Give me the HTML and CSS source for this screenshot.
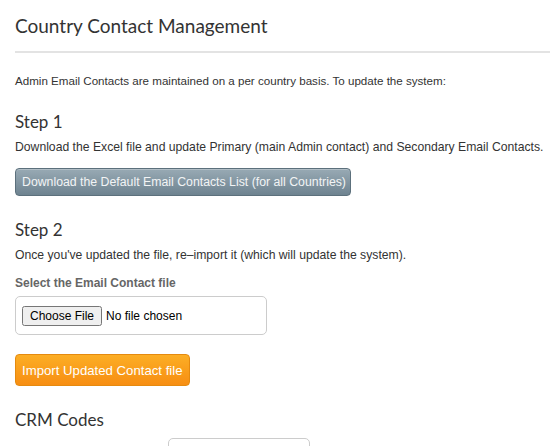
FILE: index.html
```html
<!DOCTYPE html>
<html>
<head>
<meta charset="utf-8">
<link rel="stylesheet" href="styles.css">
</head>
<body>
<div class="page">
  <h1 class="title">Country Contact Management</h1>
  <p class="intro">Admin Email Contacts are maintained on a per country basis. To update the system:</p>

  <h2 class="step">Step 1</h2>
  <p class="text">Download the Excel file and update Primary (main Admin contact) and Secondary Email Contacts.</p>
  <button class="btn btn-grey">Download the Default Email Contacts List (for all Countries)</button>

  <h2 class="step">Step 2</h2>
  <p class="text">Once you've updated the file, re&ndash;import it (which will update the system).</p>
  <label class="label">Select the Email Contact file</label>
  <div class="filebox"><input type="file" class="file"></div>
  <button class="btn btn-orange">Import Updated Contact file</button>

  <h2 class="step">CRM Codes</h2>
  <div class="crmrow"><div class="crminput"></div></div>
</div>
</body>
</html>
```
FILE: styles.css
```css
html, body { margin: 0; padding: 0; background: #fff; overflow: hidden; }
body { font-family: "Liberation Sans", Arial, sans-serif; color: #333; }
.page { padding: 0 0 0 15px; }
.title {
  font-family: Lato, "Liberation Sans", sans-serif;
  font-weight: 400;
  font-size: 19px;
  color: #333;
  margin: 0;
  padding: 14px 0 13px;
  line-height: 24px;
  border-bottom: 2px solid #e3e3e3;
}
.intro { font-size: 11.6px; line-height: 15px; margin: 20px 0 0; }
.step {
  font-family: Lato, "Liberation Sans", sans-serif;
  font-weight: 400;
  font-size: 17px;
  line-height: 20px;
  color: #333;
  margin: 24px 0 0;
}
.text { font-size: 12.2px; line-height: 15px; margin: 8px 0 0; white-space: nowrap; }
.btn {
  display: block;
  font-family: "Liberation Sans", Arial, sans-serif;
  border-radius: 4px;
  padding: 0 6px;
  cursor: pointer;
  text-align: left;
  white-space: nowrap;
}
.btn-grey {
  margin-top: 13px;
  height: 28px;
  width: 336px;
  font-size: 12.3px;
  color: #f2f4f5;
  background: linear-gradient(#98aab4, #6e8390);
  border: 1px solid #5c707c;
  box-shadow: inset 0 1px 0 rgba(255,255,255,0.25);
}
.label { display: block; font-size: 12px; font-weight: bold; color: #666; margin-top: 13px; line-height: 15px; }
.filebox {
  margin-top: 5px;
  width: 238px;
  height: 21px;
  padding: 9px 6px 7px 6px;
  border: 1px solid #ccc;
  border-radius: 5px;
}
.file { font-family: "Liberation Sans", Arial, sans-serif; font-size: 12px; color: #000; height: 21px; }
.btn-orange {
  margin-top: 19px;
  height: 32px;
  width: 175px;
  font-size: 13.2px;
  color: #fff;
  background: linear-gradient(#fcae25, #f78e12);
  border: 1px solid #e58a0f;
}
.crmrow { padding-left: 153px; margin-top: 8px; }
.crminput {
  width: 140px;
  height: 20px;
  border: 1px solid #ccc;
  border-radius: 5px;
}
```
